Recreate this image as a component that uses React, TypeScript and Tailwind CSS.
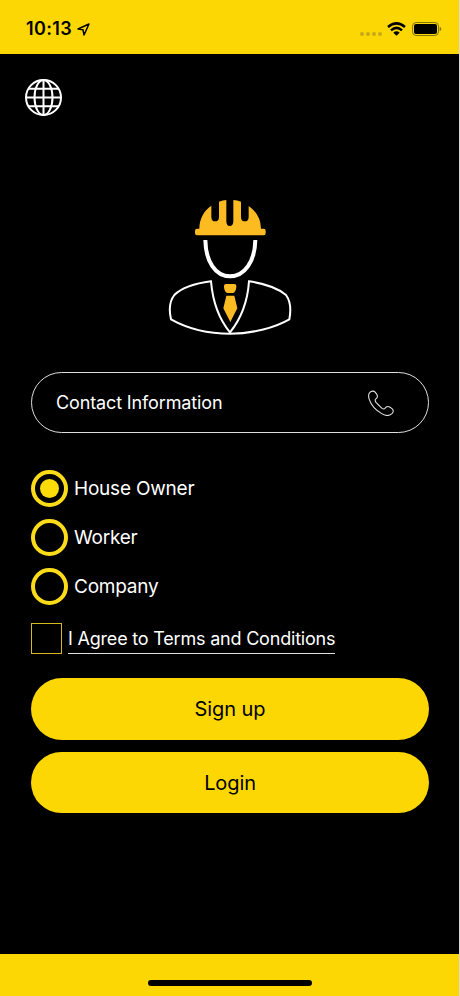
import { useState } from 'react';

const ROLES = ['House Owner', 'Worker', 'Company'];

function StatusBar() {
  return (
    <div className="h-[54px] shrink-0 bg-[#fcd703] flex items-start justify-between pl-[26px] pr-[17px] pt-[17px] text-black">
      <div className="flex items-center h-6">
        <span className="text-[18px] leading-6 font-semibold tracking-[0.35px]">10:13</span>
        <svg viewBox="0 0 39 39" className="w-[13px] h-[13px] ml-[5px]" fill="none" stroke="currentColor" strokeWidth="4.5" strokeLinejoin="round">
          <path d="M3 18 36 3 21 36 18 20Z" />
        </svg>
      </div>
      <div className="flex items-center h-6">
        <div className="flex gap-[2px] mt-[9px]">
          {[0, 1, 2, 3].map(i => (
            <span key={i} className="w-[4px] h-[4px] rounded-full bg-[#c5a91b]" />
          ))}
        </div>
        <svg viewBox="0 0 57 42" className="w-[19px] h-[14px] ml-[5px]" fill="none" stroke="currentColor" strokeWidth="7.5">
          <path d="M3 15Q28.500-7 54 15" />
          <path d="M12 25Q28.500 10 45 25" />
          <path d="M19 32Q28.500 24 38 32L28.500 41Z" fill="currentColor" stroke="none" />
        </svg>
        <svg viewBox="0 0 90 42" className="w-[30px] h-[14px] ml-[6px]">
          <rect x="1.500" y="1.500" width="78" height="39" rx="11" fill="none" stroke="#6f600c" strokeWidth="2.500" />
          <rect x="6" y="6" width="69" height="30" rx="6" />
          <path d="M83 15c7 2 7 10 0 12Z" fill="#8c780b" />
        </svg>
      </div>
    </div>
  );
}

function Globe() {
  return (
    <svg viewBox="0 0 111 111" className="w-[37px] h-[37px]" fill="none" stroke="#fff" strokeWidth="6">
      <circle cx="55.500" cy="55.500" r="52.500" />
      <ellipse cx="55.500" cy="55.500" rx="27" ry="52.500" />
      <path d="M55.500 3v105M3 55.500h105M10 29.500h91M10 81.500h91" />
    </svg>
  );
}

function WorkerLogo() {
  return (
    <svg viewBox="0 0 420 450" className="w-[140px] h-[150px]" fill="none">
      {/* Helmet */}
      <path
        d="M118 116C118 87 132 61 154 47V80Q154 94 165 94Q177 94 177 80V35Q188 31 199 30V94Q199 108 209 108Q220 108 220 94V30Q232 31 243 35V80Q243 94 254 94Q266 94 266 80V48Q302 73 303 116H311Q317 116 317 122V130Q317 136 311 136H111Q105 136 105 130V122Q105 116 111 116Z"
        fill="#fdbb22"
      />
      {/* Face */}
      <path d="M136 150C137 214 166 259 210 259S285 214 286 150" stroke="#fff" strokeWidth="12" />
      {/* Suit */}
      <path
        d="M153 274C108 280 65 294 43 315C29 333 27 362 33 388C76 412 140 431 210 431S346 412 388 388C393 362 391 333 378 315C354 295 309 280 267 274C263 332 243 386 210 427C176 386 158 332 153 274Z"
        stroke="#fff"
        strokeWidth="6"
        strokeLinejoin="miter"
      />
      {/* Tie */}
      <path d="M198 282H223Q229 282 229 288V292C228 302 224 309 219 309H203C197 309 193 301 192 292V288Q192 282 198 282ZM199 317H223L232 355 211 396 190 355Z" fill="#fdbb22" />
    </svg>
  );
}

function PhoneIcon() {
  return (
    <svg viewBox="0 0 78 78" className="w-[26px] h-[26px]" fill="none" stroke="#e4e4e4" strokeWidth="3.200" strokeLinejoin="round">
      <path d="M5 8C10 2 18 2 22 7L27 14C30 20 27 25 22 28C21 31 22 34 24 37L42 55C45 57 48 58 51 55C54 50 59 48 65 51L72 56C77 60 77 66 72 71C63 79 51 77 41 71C24 61 9 44 4 29C1 20 1 12 5 8Z" />
    </svg>
  );
}

export default function App() {
  const [role, setRole] = useState('House Owner');

  return (
    <div className="w-[460px] h-[996px] bg-black border-r border-[#d9d9d9] flex flex-col overflow-hidden text-white whitespace-nowrap font-['Inter',sans-serif]">
      <StatusBar />

      <main className="flex-1 flex flex-col pl-[31px] pr-[30px]">
        <div className="-ml-[6px] pt-[25px]">
          <Globe />
        </div>

        <div className="mt-[74px] -ml-[1px] pl-[130px]">
          <WorkerLogo />
        </div>

        <div className="mt-8 h-[61px] rounded-full border border-[#dedede] flex items-center justify-between pl-6 pr-[34px]">
          <span className="text-[18px] tracking-[-0.13px]">Contact Information</span>
          <PhoneIcon />
        </div>

        <div className="mt-[37px] flex flex-col gap-3">
          {ROLES.map(r => (
            <button key={r} onClick={() => setRole(r)} className="flex items-center gap-[6px] h-[37px] cursor-pointer">
              <span className="w-[37px] h-[37px] rounded-full border-4 border-[#fcdc18] flex items-center justify-center">
                {role === r && <span className="w-[19px] h-[19px] rounded-full bg-[#fcdc08]" />}
              </span>
              <span className="text-[19px] leading-6 tracking-[-0.22px]">{r}</span>
            </button>
          ))}
        </div>

        <div className="mt-[18px] flex items-start">
          <span className="w-[31px] h-[31px] border border-[#d6b923]" />
          <span className="ml-[6px] w-[267px] h-[31px] pt-1 border-b border-[#e0e0e0] text-[18px] leading-6 tracking-[-0.2px]">I Agree to Terms and Conditions</span>
        </div>

        <button className="mt-6 h-[62px] rounded-full bg-[#fcd703] text-black text-[20px] tracking-[-0.1px] cursor-pointer">Sign up</button>
        <button className="mt-3 h-[61px] rounded-full bg-[#fcd703] text-black text-[20px] tracking-[-0.1px] cursor-pointer">Login</button>
      </main>

      <footer className="h-[42px] shrink-0 bg-[#fcd703] flex justify-center pt-[26px]">
        <div className="w-[164px] h-[6px] rounded-full bg-black" />
      </footer>
    </div>
  );
}
